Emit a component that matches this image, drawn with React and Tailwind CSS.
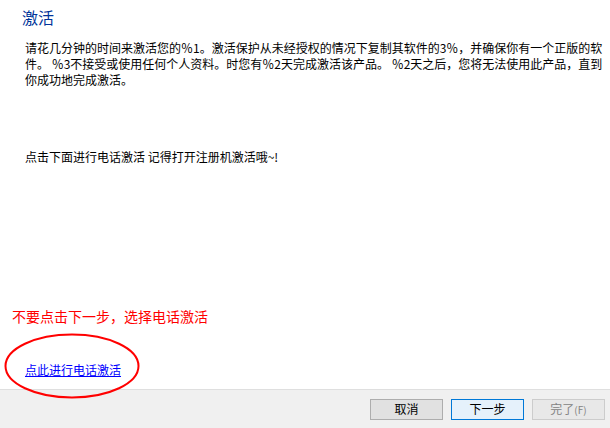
import React from 'react';

const cjk = { fontFamily: '"Noto Sans CJK SC", "Liberation Sans", sans-serif' };

const App = () => {
  return (
    <div className="relative flex h-[428px] w-[610px] flex-col bg-white text-black" style={cjk}>
      {/* Page body */}
      <div className="flex flex-1 flex-col">
        <h1 className="ml-[22px] mt-[7px] text-[16px] leading-[20px] text-[#003399]">激活</h1>

        <p className="ml-[25px] mt-[13px] text-[12px] leading-[16px]">
          请花几分钟的时间来激活您的％1。激活保护从未经授权的情况下复制其软件的3％，并确保你有一个正版的软
          <br />
          件。 ％3不接受或使用任何个人资料。时您有％2天完成激活该产品。 ％2天之后，您将无法使用此产品，直到
          <br />
          你成功地完成激活。
        </p>

        <p className="ml-[25px] mt-[61px] text-[12px] leading-[16px]">点击下面进行电话激活 记得打开注册机激活哦~!</p>

        <p className="ml-[12px] mt-[142px] text-[14px] leading-[18px] text-[#ff0000]">不要点击下一步，选择电话激活</p>

        <a href="#" className="ml-[25px] mt-[37px] self-start text-[12px] leading-[16px] text-[#0000ff] underline">
          点此进行电话激活
        </a>
      </div>

      {/* Wizard footer */}
      <div className="flex h-[39px] items-center justify-end gap-[8px] border-t border-[#dfdfdf] bg-[#f0f0f0] pr-[5px]">
        <button className="h-[21px] w-[73px] border border-[#adadad] bg-[#e1e1e1] text-[12px] leading-none">取消</button>
        <button className="h-[21px] w-[73px] border border-[#0078d7] bg-[#e5f1fb] text-[12px] leading-none">下一步</button>
        <button className="h-[21px] w-[73px] border border-[#cccccc] bg-[#e8e8e8] text-[12px] leading-none text-[#838383]">
          完了<span className="text-[10px]">(F)</span>
        </button>
      </div>

      {/* Red annotation circle */}
      <svg className="pointer-events-none absolute left-0 top-[330px]" width="150" height="75" viewBox="0 0 150 75">
        <ellipse cx="72" cy="36" rx="66.5" ry="31.5" fill="none" stroke="#ff0000" strokeWidth="2" />
      </svg>
    </div>
  );
};

export default App;
